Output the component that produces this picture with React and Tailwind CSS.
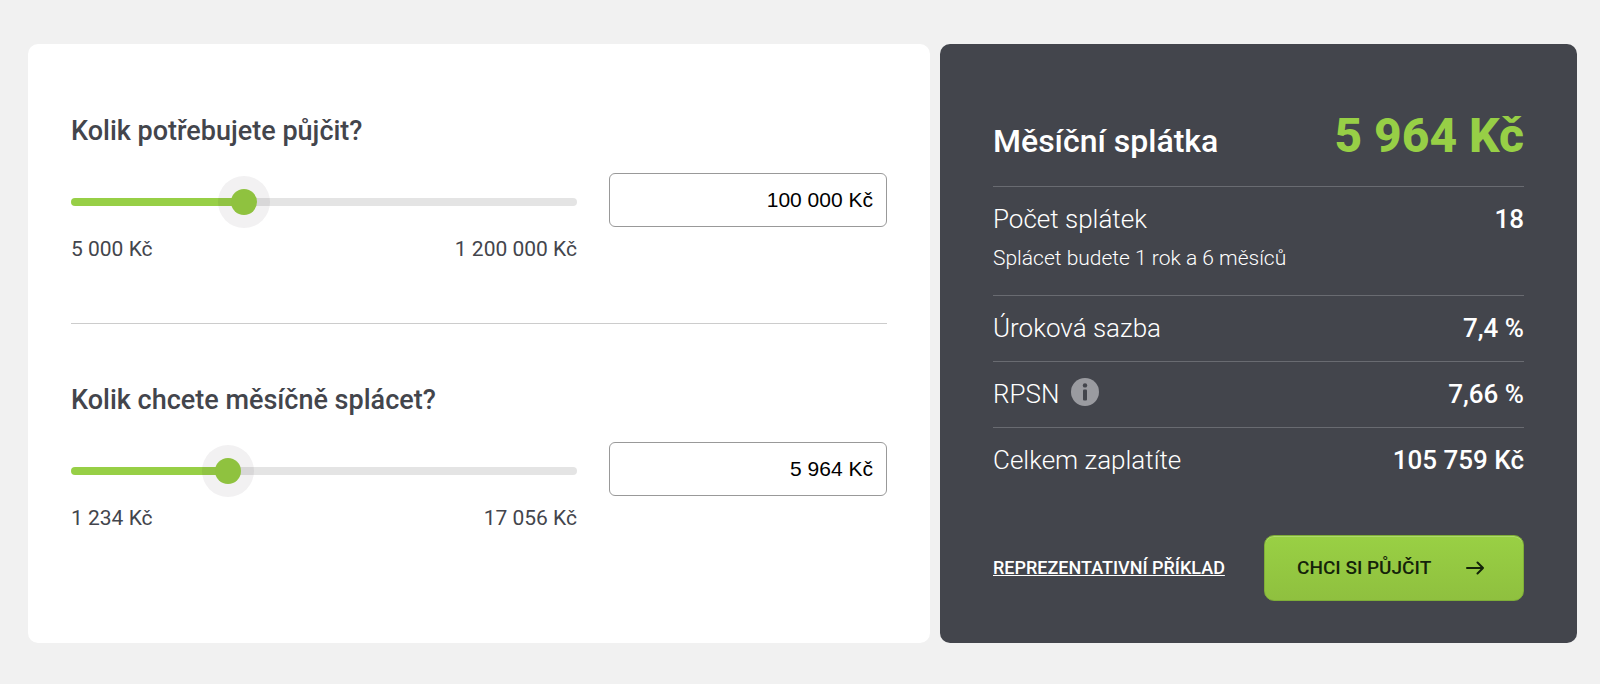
import { useState } from 'react';

const formatCzk = (value) => `${String(value).replace(/\B(?=(\d{3})+$)/g, ' ')} Kč`;

const parseCzk = (text) => Number(text.replace(/\D/g, ''));

const TRACK_STEPS = 1000;

/**
 * Range slider with a text box for the exact amount.
 * curve < 1 gives small amounts more room on the track
 */
function AmountField({ id, label, min, max, value, curve = 1, onChange }) {
  const ratio = Math.min(1, Math.max(0, (value - min) / (max - min)));
  const position = Math.round(Math.pow(ratio, curve) * TRACK_STEPS);
  const percent = (position / TRACK_STEPS) * 100;

  const handleSlide = (e) => {
    const next = Math.pow(Number(e.target.value) / TRACK_STEPS, 1 / curve);
    onChange(Math.round(min + next * (max - min)));
  };

  return (
    <div>
      <label htmlFor={id} className="block text-[27px] leading-8 font-medium">
        {label}
      </label>
      <div className="mt-[26px] flex items-start gap-8">
        <div className="min-w-0 flex-1 pt-[25px]">
          <input
            type="range"
            aria-label={label}
            min={0}
            max={TRACK_STEPS}
            value={position}
            onChange={handleSlide}
            style={{
              backgroundImage: `linear-gradient(to right, #97cf46 ${percent}%, #e4e4e4 ${percent}%)`,
            }}
            className="block h-2 w-full cursor-pointer appearance-none rounded-full outline-none [&::-webkit-slider-thumb]:size-[26px] [&::-webkit-slider-thumb]:appearance-none [&::-webkit-slider-thumb]:rounded-full [&::-webkit-slider-thumb]:bg-[#8fc23f] [&::-webkit-slider-thumb]:shadow-[0_0_0_13px_rgba(30,25,40,0.06)]"
          />
          <div className="mt-[29px] flex justify-between text-[21px] leading-7">
            <span>{formatCzk(min)}</span>
            <span>{formatCzk(max)}</span>
          </div>
        </div>
        <input
          id={id}
          type="text"
          inputMode="numeric"
          value={formatCzk(value)}
          onChange={(e) => onChange(parseCzk(e.target.value))}
          className="h-[54px] w-[278px] rounded-md border border-[#999] bg-white px-[13px] text-right font-['Liberation_Sans',Arial,sans-serif] text-[21px] text-black outline-none"
        />
      </div>
    </div>
  );
}

function SummaryRow({ label, value, note, children }) {
  return (
    <div className="border-t border-[#696b71] py-4">
      <div className="flex items-center justify-between text-[26px] leading-[33px]">
        <dt className="flex items-start gap-3 font-light">
          {label}
          {children}
        </dt>
        <dd className="font-medium">{value}</dd>
      </div>
      {note && <dd className="mt-2 mb-[7px] text-[21px] leading-7 font-light">{note}</dd>}
    </div>
  );
}

function InfoIcon() {
  return (
    <svg viewBox="0 0 28 28" className="size-7" aria-hidden="true">
      <circle cx="14" cy="14" r="14" fill="#9a9ba0" />
      <circle cx="14" cy="7.4" r="2.2" fill="#43454c" />
      <rect x="12" y="11.4" width="4" height="11" rx="1" fill="#43454c" />
    </svg>
  );
}

function ArrowIcon() {
  return (
    <svg
      viewBox="0 0 18 14"
      className="h-3.5 w-[18px]"
      fill="none"
      stroke="currentColor"
      strokeWidth="2"
      strokeLinecap="round"
      strokeLinejoin="round"
      aria-hidden="true"
    >
      <path d="M1 7h16M11.5 1.5L17 7l-5.5 5.5" />
    </svg>
  );
}

function App() {
  const [amount, setAmount] = useState(100000);
  const [payment, setPayment] = useState(5964);

  return (
    <main className="min-h-screen bg-[#f1f1f1] pt-11 pr-[23px] pb-10 pl-7 font-[Roboto,sans-serif]">
      <div className="grid grid-cols-[902fr_637fr] gap-2.5">
        <section className="rounded-[10px] bg-white px-[43px] pt-[71px] pb-10 text-[#43454c]">
          <AmountField
            id="amount"
            label="Kolik potřebujete půjčit?"
            min={5000}
            max={1200000}
            curve={0.433}
            value={amount}
            onChange={setAmount}
          />
          <hr className="my-[60px] border-[#ccc]" />
          <AmountField
            id="payment"
            label="Kolik chcete měsíčně splácet?"
            min={1234}
            max={17056}
            value={payment}
            onChange={setPayment}
          />
        </section>

        <section className="rounded-[10px] bg-[#43454c] px-[53px] pt-16 pb-[42px] text-white">
          <dl>
            <div className="flex items-baseline justify-between pb-[22px]">
              <dt className="text-[32px] leading-10 font-medium">Měsíční splátka</dt>
              <dd className="text-5xl leading-14 font-extrabold text-[#97cf46]">{formatCzk(payment)}</dd>
            </div>
            <SummaryRow label="Počet splátek" value="18" note="Splácet budete 1 rok a 6 měsíců" />
            <SummaryRow label="Úroková sazba" value="7,4 %" />
            <SummaryRow label="RPSN" value="7,66 %">
              <button type="button" aria-label="Co je RPSN" className="cursor-pointer">
                <InfoIcon />
              </button>
            </SummaryRow>
            <SummaryRow label="Celkem zaplatíte" value="105 759 Kč" />
          </dl>

          <div className="mt-[42px] flex items-center justify-between">
            <a href="#priklad" className="text-lg font-medium uppercase underline">
              Reprezentativní příklad
            </a>
            <button
              type="button"
              className="flex h-[66px] w-[260px] cursor-pointer items-center justify-between rounded-[10px] border border-[#7fae38] bg-linear-to-b from-[#99d044] to-[#8fc03f] pr-[39px] pl-8 text-[19px] font-medium text-[#14230a] uppercase shadow-[inset_0_1px_0_#aeda6c]"
            >
              Chci si půjčit
              <ArrowIcon />
            </button>
          </div>
        </section>
      </div>
    </main>
  );
}

export default App;
